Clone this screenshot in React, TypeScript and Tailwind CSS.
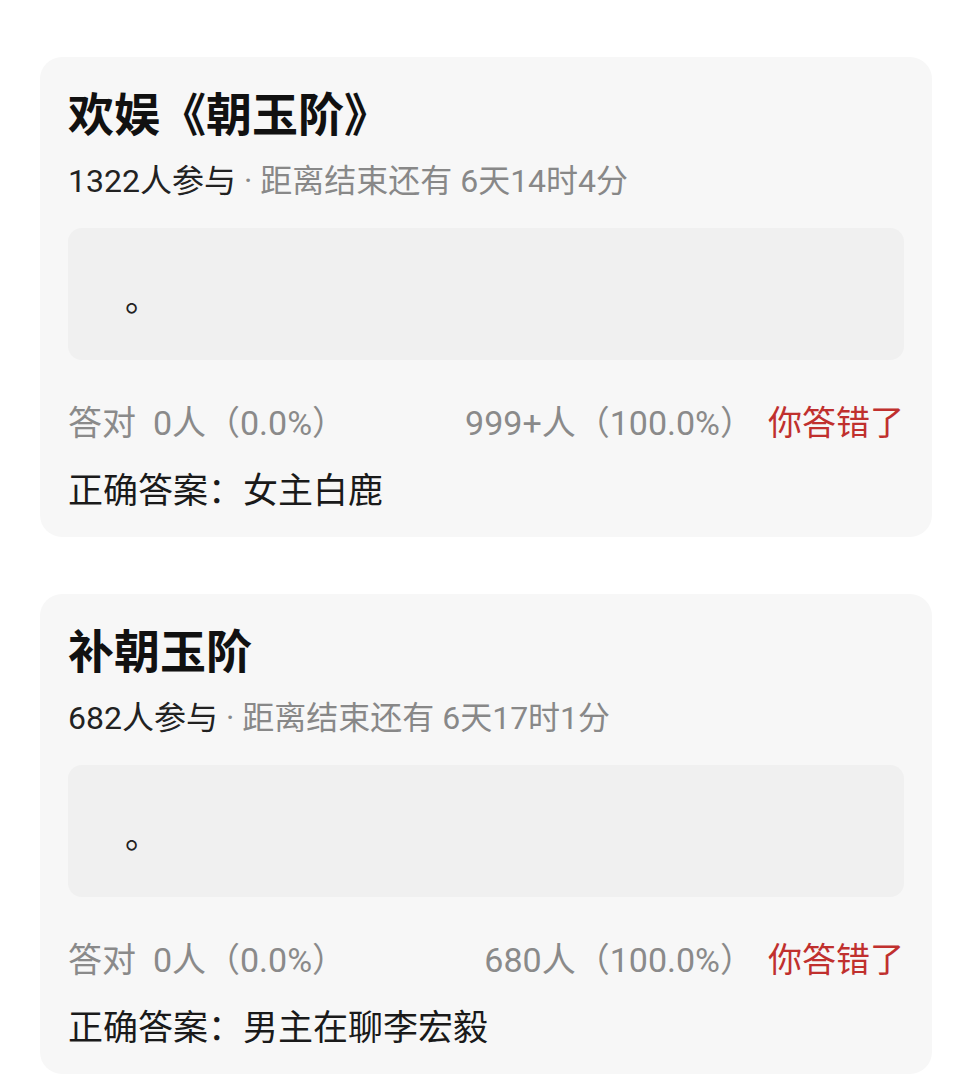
type Quiz = {
  title: string
  joined: number
  remain: string
  right: string
  wrong: string
  answer: string
}

const QUIZZES: Quiz[] = [
  {
    title: '欢娱《朝玉阶》',
    joined: 1322,
    remain: '6天14时4分',
    right: '0人（0.0%）',
    wrong: '999+人（100.0%）',
    answer: '女主白鹿',
  },
  {
    title: '补朝玉阶',
    joined: 682,
    remain: '6天17时1分',
    right: '0人（0.0%）',
    wrong: '680人（100.0%）',
    answer: '男主在聊李宏毅',
  },
]

function QuizCard({ q }: { q: Quiz }) {
  return (
    <div className="rounded-[22px] bg-[#f7f7f7] px-7 pt-[30px] pb-[23px]">
      <h2 className="text-[46px] leading-[57px] font-bold text-[#111]">{q.title}</h2>
      <p className="mt-[17px] text-[32px] leading-[40px] text-[#888]">
        <span className="text-[#222]">{q.joined}人参与</span> · 距离结束还有 {q.remain}
      </p>

      {/* option area, content left blank by the poster */}
      <div className="mt-[27px] flex h-[132px] items-center rounded-[14px] bg-[#f0f0f0] pt-[10px] pl-[57px]">
        <span className="text-[34px] leading-none text-[#222]">。</span>
      </div>

      <div className="mt-[41px] flex items-center justify-between text-[34px] leading-[44px]">
        <span className="text-[#8a8a8a]">答对&nbsp; {q.right}</span>
        <div className="flex items-center gap-[14px]">
          <span className="text-[#8a8a8a]">{q.wrong}</span>
          <span className="text-[#c0302e]">你答错了</span>
        </div>
      </div>

      <p className="mt-[25px] text-[35px] leading-[44px] text-[#1a1a1a]">正确答案：{q.answer}</p>
    </div>
  )
}

export default function App() {
  return (
    <div
      className="min-h-[1080px] w-[972px] bg-white px-10 pt-[57px]"
      style={{ fontFamily: 'Roboto, "Noto Sans CJK SC", sans-serif' }}
    >
      <div className="flex flex-col gap-[57px]">
        {QUIZZES.map(q => (
          <QuizCard key={q.title} q={q} />
        ))}
      </div>
    </div>
  )
}
